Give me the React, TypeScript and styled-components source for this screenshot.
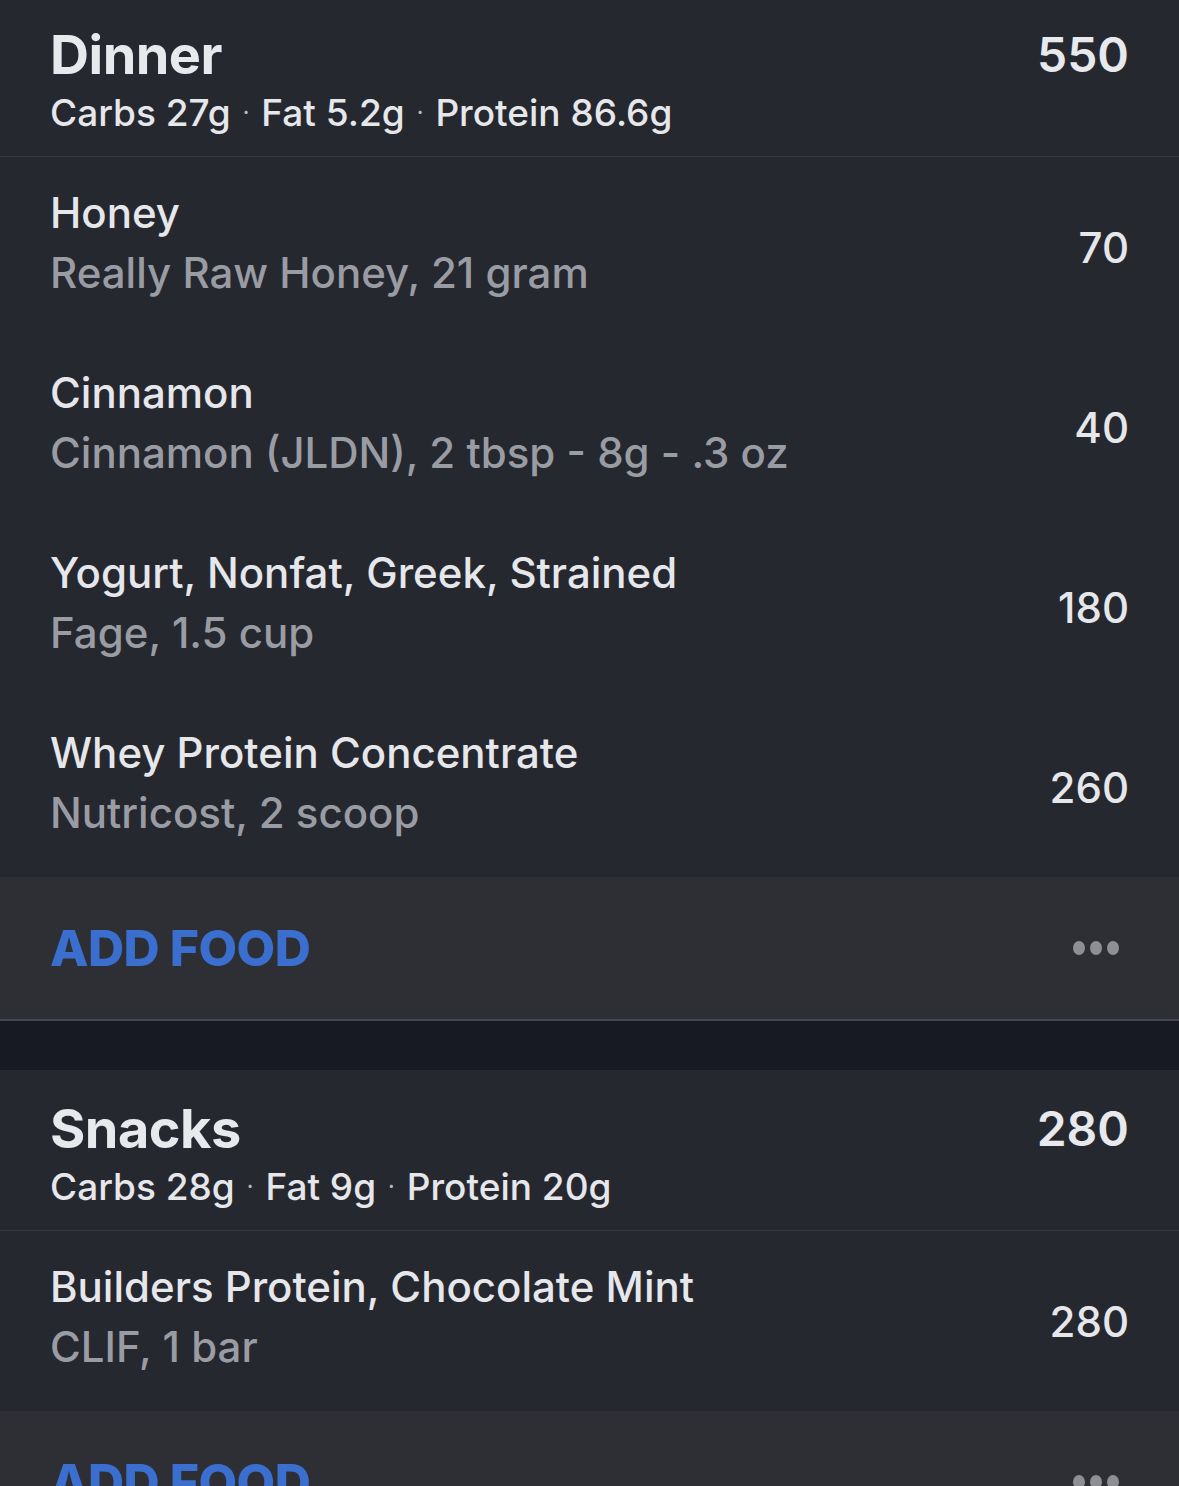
import React from "react";
import styled, { createGlobalStyle } from "styled-components";

const Global = createGlobalStyle`
  html, body { margin: 0; padding: 0; background: #262830; }
  body { font-family: Inter, "Noto Sans", sans-serif; -webkit-font-smoothing: antialiased; }
`;

const Page = styled.div`
  width: 1179px;
  height: 1486px;
  overflow: hidden;
  background: #262830;
  color: #e6e7ea;
`;

const Scroller = styled.div`
  margin-top: -4px;
  display: flex;
  flex-direction: column;
`;

const Section = styled.section`
  display: flex;
  flex-direction: column;
  background: #262830;
`;

const Header = styled.div`
  display: flex;
  justify-content: space-between;
  align-items: flex-start;
  height: 161px;
  box-sizing: border-box;
  padding: 27px 50px 0 50px;
  border-bottom: 1px solid #373942;
`;

const HeaderLeft = styled.div`
  display: flex;
  flex-direction: column;
`;

const MealTitle = styled.div`
  font-size: 54px;
  font-weight: 700;
  line-height: 64px;
  letter-spacing: -0.5px;
  color: #e8e9ec;
`;

const Macros = styled.div`
  font-size: 37px;
  font-weight: 500;
  line-height: 50px;
  margin-top: 0px;
  color: #e6e7ea;
`;

const Dot = styled.span`
  display: inline-block;
  margin: 0 12px;
  font-size: 22px;
  vertical-align: 6px;
  color: #b8b9be;
`;

const MealCalories = styled.div`
  font-size: 48px;
  font-weight: 600;
  line-height: 64px;
  color: #e8e9ec;
`;

const FoodRow = styled.div`
  display: flex;
  justify-content: space-between;
  align-items: center;
  height: 180px;
  box-sizing: border-box;
  padding: 0 50px;
`;

const FoodInfo = styled.div`
  display: flex;
  flex-direction: column;
  gap: 10px;
  padding-bottom: 8px;
`;

const FoodName = styled.div`
  font-size: 42px;
  font-weight: 500;
  line-height: 50px;
  color: #e6e7ea;
`;

const FoodDetail = styled.div`
  font-size: 42px;
  font-weight: 500;
  line-height: 50px;
  color: #9a9ca3;
`;

const FoodCalories = styled.div`
  font-size: 42px;
  font-weight: 500;
  color: #e6e7ea;
`;

const AddRow = styled.div`
  display: flex;
  justify-content: space-between;
  align-items: center;
  height: 144px;
  box-sizing: border-box;
  padding: 0 60px 0 50px;
  background: #2e2f35;
  border-bottom: 2px solid #44464e;
`;

const AddFood = styled.div`
  font-size: 50px;
  font-weight: 800;
  letter-spacing: -0.5px;
  color: #3a6fd0;
`;

const More = styled.div`
  display: flex;
  gap: 5px;
`;

const MoreDot = styled.span`
  width: 12px;
  height: 14px;
  border-radius: 50%;
  background: #8e8f95;
`;

const Gap = styled.div`
  height: 49px;
  background: #171923;
`;

type Food = { name: string; detail: string; cal: number };

const dinner: Food[] = [
  { name: "Honey", detail: "Really Raw Honey, 21 gram", cal: 70 },
  { name: "Cinnamon", detail: "Cinnamon (JLDN), 2 tbsp - 8g - .3 oz", cal: 40 },
  { name: "Yogurt, Nonfat, Greek, Strained", detail: "Fage, 1.5 cup", cal: 180 },
  { name: "Whey Protein Concentrate", detail: "Nutricost, 2 scoop", cal: 260 },
];

const snacks: Food[] = [
  { name: "Builders Protein, Chocolate Mint", detail: "CLIF, 1 bar", cal: 280 },
];

function Meal({ title, cal, macros, foods }: { title: string; cal: number; macros: string[]; foods: Food[] }) {
  return (
    <Section>
      <Header>
        <HeaderLeft>
          <MealTitle>{title}</MealTitle>
          <Macros>
            {macros.map((m, i) => (
              <React.Fragment key={m}>
                {i > 0 && <Dot>·</Dot>}
                {m}
              </React.Fragment>
            ))}
          </Macros>
        </HeaderLeft>
        <MealCalories>{cal}</MealCalories>
      </Header>
      {foods.map((f) => (
        <FoodRow key={f.name}>
          <FoodInfo>
            <FoodName>{f.name}</FoodName>
            <FoodDetail>{f.detail}</FoodDetail>
          </FoodInfo>
          <FoodCalories>{f.cal}</FoodCalories>
        </FoodRow>
      ))}
      <AddRow>
        <AddFood>ADD FOOD</AddFood>
        <More>
          <MoreDot />
          <MoreDot />
          <MoreDot />
        </More>
      </AddRow>
    </Section>
  );
}

export default function App() {
  return (
    <Page>
      <Global />
      <Scroller>
        <Meal title="Dinner" cal={550} macros={["Carbs 27g", "Fat 5.2g", "Protein 86.6g"]} foods={dinner} />
        <Gap />
        <Meal title="Snacks" cal={280} macros={["Carbs 28g", "Fat 9g", "Protein 20g"]} foods={snacks} />
      </Scroller>
    </Page>
  );
}
